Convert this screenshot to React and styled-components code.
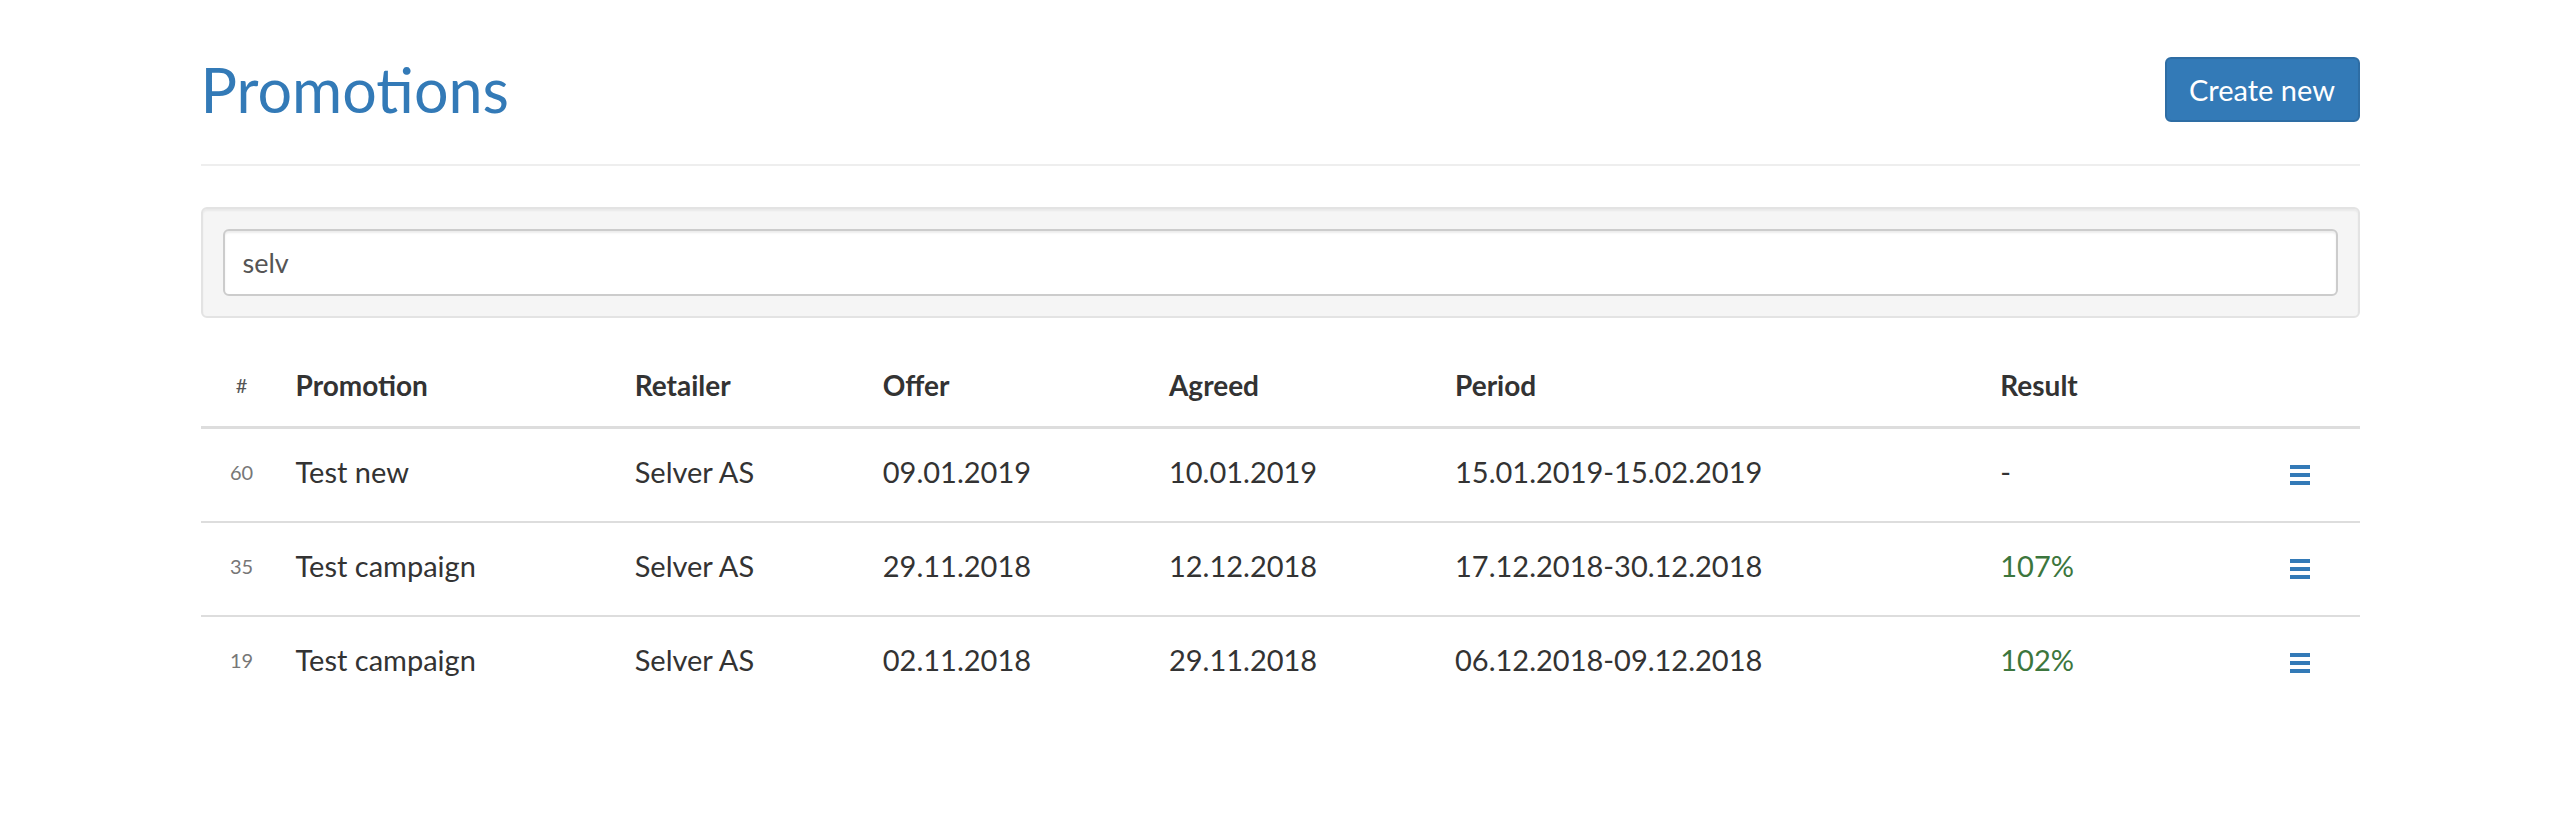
import React, { useState } from "react";
import styled, { createGlobalStyle } from "styled-components";

const GlobalStyle = createGlobalStyle`
  body {
    margin: 0;
    background: #fff;
    font-family: Lato, "Open Sans", "Liberation Sans", sans-serif;
    color: #333;
  }
`;

const promotions = [
  { id: 60, name: "Test new", retailer: "Selver AS", offer: "09.01.2019", agreed: "10.01.2019", period: "15.01.2019-15.02.2019", result: null },
  { id: 35, name: "Test campaign", retailer: "Selver AS", offer: "29.11.2018", agreed: "12.12.2018", period: "17.12.2018-30.12.2018", result: 107 },
  { id: 19, name: "Test campaign", retailer: "Selver AS", offer: "02.11.2018", agreed: "29.11.2018", period: "06.12.2018-09.12.2018", result: 102 },
];

const columns = [
  { key: "id", label: "#", width: 82, center: true },
  { key: "name", label: "Promotion", width: 339 },
  { key: "retailer", label: "Retailer", width: 248 },
  { key: "offer", label: "Offer", width: 286 },
  { key: "agreed", label: "Agreed", width: 286 },
  { key: "period", label: "Period", width: 545 },
  { key: "result", label: "Result", width: 253 },
  { key: "menu", label: "", width: 119, center: true },
];

const MenuIcon = () => (
  <svg width="20" height="20" viewBox="0 0 20 20" fill="#337ab7">
    <rect x="0" y="0" width="20" height="4" />
    <rect x="0" y="8" width="20" height="4" />
    <rect x="0" y="16" width="20" height="4" />
  </svg>
);

export default function App() {
  const [query, setQuery] = useState("selv");

  return (
    <>
      <GlobalStyle />
      <Container>
        <Header>
          <Title>Promotions</Title>
          <CreateButton>Create new</CreateButton>
        </Header>

        <Well>
          <SearchInput value={query} onChange={(e) => setQuery(e.target.value)} />
        </Well>

        <Table>
          <colgroup>
            {columns.map((c) => (
              <col key={c.key} style={{ width: c.width }} />
            ))}
          </colgroup>
          <thead>
            <tr>
              {columns.map((c) =>
                c.key === "id" ? (
                  <HashHead key={c.key}>#</HashHead>
                ) : (
                  <Th key={c.key} $center={c.center}>
                    {c.label}
                  </Th>
                )
              )}
            </tr>
          </thead>
          <tbody>
            {promotions.map((p) => (
              <Row key={p.id}>
                <IdCell>{p.id}</IdCell>
                <Td>{p.name}</Td>
                <Td>{p.retailer}</Td>
                <Td>{p.offer}</Td>
                <Td>{p.agreed}</Td>
                <Td>{p.period}</Td>
                <Td $success={p.result !== null}>
                  {p.result === null ? "-" : `${p.result}%`}
                </Td>
                <IconCell>
                  <MenuButton>
                    <MenuIcon />
                  </MenuButton>
                </IconCell>
              </Row>
            ))}
          </tbody>
        </Table>
      </Container>
    </>
  );
}

const Container = styled.div`
  width: 2159px;
  margin: 0 auto;
`;

const Header = styled.div`
  display: flex;
  justify-content: space-between;
  align-items: center;
  padding: 57px 0 42px;
  border-bottom: 2px solid #eee;
`;

const Title = styled.h1`
  margin: 0;
  font-size: 61px;
  font-weight: 400;
  line-height: 65px;
  color: #337ab7;
`;

const CreateButton = styled.button`
  width: 195px;
  height: 65px;
  padding: 0;
  border: 2px solid #2e6da4;
  border-radius: 6px;
  background: #337ab7;
  color: #fff;
  font-family: inherit;
  font-size: 29px;
  cursor: pointer;
`;

const Well = styled.div`
  margin-top: 41px;
  padding: 20px;
  background: #f5f5f5;
  border: 2px solid #e3e3e3;
  border-radius: 6px;
  box-shadow: inset 0 2px 2px rgba(0, 0, 0, 0.05);
`;

const SearchInput = styled.input`
  display: block;
  width: 100%;
  height: 67px;
  box-sizing: border-box;
  padding: 0 18px;
  border: 2px solid #ccc;
  border-radius: 6px;
  background: #fff;
  box-shadow: inset 0 2px 2px rgba(0, 0, 0, 0.075);
  font-family: inherit;
  font-size: 27px;
  color: #555;
  outline: none;
`;

const Table = styled.table`
  width: 100%;
  margin-top: 36px;
  border-collapse: collapse;
  table-layout: fixed;
`;

const Th = styled.th`
  padding: 11px 13px 21px;
  line-height: 40px;
  text-align: ${(p) => (p.$center ? "center" : "left")};
  vertical-align: middle;
  font-size: 28px;
  font-weight: 700;
  color: #333;
  border-bottom: 3px solid #ddd;
`;

const HashHead = styled(Th)`
  text-align: center;
  font-size: 20px;
  font-weight: 400;
  color: #555;
`;

const Row = styled.tr`
  & + & > td {
    border-top: 2px solid #ddd;
  }
`;

const Td = styled.td`
  padding: 23px 13px 29px;
  line-height: 40px;
  vertical-align: middle;
  text-align: left;
  font-size: 29px;
  color: ${(p) => (p.$success ? "#3c763d" : "#333")};
  white-space: nowrap;
`;

const IdCell = styled(Td)`
  text-align: center;
  font-size: 20px;
  color: #777;
`;

const IconCell = styled(Td)`
  padding: 36px 13px;
  line-height: 20px;
`;

const MenuButton = styled.span`
  display: flex;
  width: 20px;
  margin: 0 auto;
  cursor: pointer;
`;
